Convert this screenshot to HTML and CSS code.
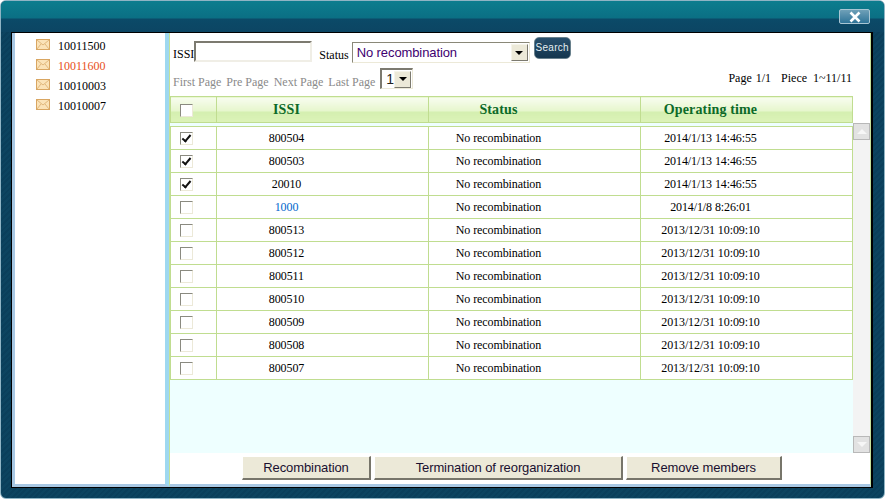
FILE: index.html
```html
<!DOCTYPE html>
<html lang="en">
  <head>
    <meta charset="UTF-8" />
    <title>Group members</title>
    <link rel="stylesheet" href="styles.css">
  </head>
  <body>
    <div class="window">
      <div class="titlebar">
        <button class="close" aria-label="Close">
          <svg width="14" height="12" viewBox="0 0 14 12"><path d="M2.5 1.5 L11.5 10.5 M11.5 1.5 L2.5 10.5" stroke="#fff" stroke-width="2.6" fill="none"/></svg>
        </button>
      </div>
      <div class="frame">
        <div class="sidebar">
          <ul class="group-list">
            <li><svg class="mail" width="14" height="11" viewBox="0 0 14 11"><rect x="0.5" y="0.5" width="13" height="10" fill="#fbe3b8" stroke="#d9a662"/><path d="M1 1 L7 6 L13 1 M1 10 L5 5 M13 10 L9 5" fill="none" stroke="#e0b77c"/></svg>10011500</li>
            <li class="active"><svg class="mail" width="14" height="11" viewBox="0 0 14 11"><rect x="0.5" y="0.5" width="13" height="10" fill="#fbe3b8" stroke="#d9a662"/><path d="M1 1 L7 6 L13 1 M1 10 L5 5 M13 10 L9 5" fill="none" stroke="#e0b77c"/></svg>10011600</li>
            <li><svg class="mail" width="14" height="11" viewBox="0 0 14 11"><rect x="0.5" y="0.5" width="13" height="10" fill="#fbe3b8" stroke="#d9a662"/><path d="M1 1 L7 6 L13 1 M1 10 L5 5 M13 10 L9 5" fill="none" stroke="#e0b77c"/></svg>10010003</li>
            <li><svg class="mail" width="14" height="11" viewBox="0 0 14 11"><rect x="0.5" y="0.5" width="13" height="10" fill="#fbe3b8" stroke="#d9a662"/><path d="M1 1 L7 6 L13 1 M1 10 L5 5 M13 10 L9 5" fill="none" stroke="#e0b77c"/></svg>10010007</li>
          </ul>
        </div>
        <div class="main">
          <div class="search-row">
            <span class="lbl">ISSI</span><input class="issi" type="text" />
            <span class="lbl status-lbl">Status</span>
            <div class="select wide"><span>No recombination</span><i class="arrow"><b></b></i></div>
            <button class="search">Search</button>
          </div>
          <div class="pager-row">
            <div class="pager">
              <span>First Page</span><span>Pre Page</span><span>Next Page</span><span>Last Page</span>
              <div class="select small"><span>1</span><i class="arrow"><b></b></i></div>
            </div>
            <div class="page-info"><span class="page-count">Page&nbsp; 1/1</span><span>Piece&nbsp; 1~11/11</span></div>
          </div>
          <table class="head-table">
            <tr>
              <th class="c1"><i class="check"></i></th>
              <th class="c2">ISSI</th>
              <th class="c3">Status</th>
              <th class="c4">Operating time</th>
            </tr>
          </table>
          <div class="list-area">
            <div class="list">
              <table class="data-table">
                <tr><td class="c1"><i class="check on"></i></td><td class="c2">800504</td><td class="c3">No recombination</td><td class="c4">2014/1/13 14:46:55</td></tr>
                <tr><td class="c1"><i class="check on"></i></td><td class="c2">800503</td><td class="c3">No recombination</td><td class="c4">2014/1/13 14:46:55</td></tr>
                <tr><td class="c1"><i class="check on"></i></td><td class="c2">20010</td><td class="c3">No recombination</td><td class="c4">2014/1/13 14:46:55</td></tr>
                <tr><td class="c1"><i class="check"></i></td><td class="c2 link">1000</td><td class="c3">No recombination</td><td class="c4">2014/1/8 8:26:01</td></tr>
                <tr><td class="c1"><i class="check"></i></td><td class="c2">800513</td><td class="c3">No recombination</td><td class="c4">2013/12/31 10:09:10</td></tr>
                <tr><td class="c1"><i class="check"></i></td><td class="c2">800512</td><td class="c3">No recombination</td><td class="c4">2013/12/31 10:09:10</td></tr>
                <tr><td class="c1"><i class="check"></i></td><td class="c2">800511</td><td class="c3">No recombination</td><td class="c4">2013/12/31 10:09:10</td></tr>
                <tr><td class="c1"><i class="check"></i></td><td class="c2">800510</td><td class="c3">No recombination</td><td class="c4">2013/12/31 10:09:10</td></tr>
                <tr><td class="c1"><i class="check"></i></td><td class="c2">800509</td><td class="c3">No recombination</td><td class="c4">2013/12/31 10:09:10</td></tr>
                <tr><td class="c1"><i class="check"></i></td><td class="c2">800508</td><td class="c3">No recombination</td><td class="c4">2013/12/31 10:09:10</td></tr>
                <tr><td class="c1"><i class="check"></i></td><td class="c2">800507</td><td class="c3">No recombination</td><td class="c4">2013/12/31 10:09:10</td></tr>
              </table>
            </div>
            <div class="scrollbar">
              <div class="scroll-btn"><b class="up"></b></div>
              <div class="scroll-btn"><b class="down"></b></div>
            </div>
          </div>
          <div class="actions">
            <button class="btn-recomb">Recombination</button>
            <button class="btn-term">Termination of reorganization</button>
            <button class="btn-remove">Remove members</button>
          </div>
        </div>
      </div>
    </div>
  </body>
</html>
```

FILE: styles.css
```css
html,
body {
  margin: 0;
  padding: 0;
  background: #fff;
}
.window {
  width: 885px;
  height: 499px;
  box-sizing: border-box;
  display: flex;
  flex-direction: column;
  padding: 0 11px 10px 10px;
  border: 1px solid #8fb4c4;
  border-radius: 6px;
  background: repeating-linear-gradient(135deg, #0c4460 0 2px, #0a3f5b 2px 4px);
  overflow: hidden;
}
.titlebar {
  height: 31px;
  margin: 0 -11px 0 -10px;
  flex: none;
  display: flex;
  justify-content: flex-end;
  align-items: flex-start;
  padding: 8px 14px 0 0;
  box-sizing: border-box;
  background: linear-gradient(#0c7d8e 0, #0b6f84 17px, #0b4a68 18px, #0c4563 100%);
}
.close {
  width: 31px;
  height: 15px;
  padding: 0;
  display: flex;
  align-items: center;
  justify-content: center;
  background: linear-gradient(#6fa0b8, #2f7498);
  border: 1px solid #a9c6d4;
  border-radius: 2px;
}
.frame {
  flex: 1;
  display: flex;
  box-sizing: border-box;
  border: 1px solid #000;
  border-right-width: 2px;
  background: #fff;
  min-height: 0;
}
.sidebar {
  width: 150px;
  flex: none;
  margin-left: 3px;
  background: #fff;
  box-shadow: -3px 0 0 #a8c8e4;
  border-right: 4px solid #9ed8f0;
  border-bottom: 3px solid #a8c8e4;
}
.group-list {
  list-style: none;
  margin: 0;
  padding: 3px 0 0 21px;
  font: 12px "Liberation Serif", serif;
  color: #000;
}
.group-list li {
  height: 20px;
  line-height: 20px;
  display: flex;
  align-items: center;
  gap: 8px;
}
.group-list .mail {
  margin-top: -3px;
}
.group-list .active {
  color: #e8501a;
}
.main {
  flex: 1;
  min-width: 0;
  display: flex;
  flex-direction: column;
  border-left: 1px solid #c4e09a;
  border-right: 1px solid #c4e09a;
  border-bottom: 3px solid #a8c8e4;
  font: 12px "Liberation Serif", serif;
  color: #000;
}
.search-row {
  height: 30px;
  flex: none;
  display: flex;
  align-items: flex-start;
  padding: 8px 0 0 3px;
  box-sizing: border-box;
}
.lbl {
  line-height: 14px;
  margin-top: 6px;
}
.status-lbl {
  margin-top: 7px;
  margin-left: 7px;
  margin-right: 3px;
}
.issi {
  width: 118px;
  height: 21px;
  box-sizing: border-box;
  margin: 0;
  padding: 0;
  border: 2px solid;
  border-color: #7c7a70 #f0eee6 #f0eee6 #7c7a70;
  background: #fff;
}
.select {
  box-sizing: border-box;
  display: flex;
  align-items: center;
  background: #fff;
  border: 1px solid;
  border-color: #8a8878 #ece9d8 #ece9d8 #8a8878;
  font: 13px "Liberation Sans", sans-serif;
  color: #400070;
}
.select span {
  flex: 1;
  padding-left: 4px;
  letter-spacing: -0.1px;
}
.select.wide {
  width: 178px;
  height: 21px;
  margin-top: 1px;
}
.select.small {
  width: 33px;
  height: 21px;
  color: #222;
  font-size: 14px;
  border-width: 2px 1px 1px 2px;
  border-color: #7c7a70 #ece9d8 #ece9d8 #7c7a70;
}
.arrow {
  width: 17px;
  height: 17px;
  margin-right: 1px;
  flex: none;
  box-sizing: border-box;
  display: flex;
  align-items: center;
  justify-content: center;
  background: #ece9d8;
  border: 1px solid;
  border-color: #f5f4ea #7c7a70 #7c7a70 #f5f4ea;
}
.arrow b {
  width: 0;
  height: 0;
  border-left: 4px solid transparent;
  border-right: 4px solid transparent;
  border-top: 4px solid #000;
}
.search {
  width: 37px;
  height: 22px;
  margin: -4px 0 0 4px;
  padding: 0 0 2px;
  border: 1px solid #68808c;
  border-radius: 5px;
  background: linear-gradient(#274f6c, #14364e);
  color: #e4eef2;
  font: 10px "Liberation Sans", sans-serif;
  letter-spacing: 0.3px;
}
.pager-row {
  height: 33px;
  flex: none;
  display: flex;
  justify-content: space-between;
  align-items: flex-start;
  padding: 5px 18px 0 3px;
  box-sizing: border-box;
}
.pager {
  display: flex;
  align-items: flex-start;
  gap: 5px;
  color: #8a8a8a;
  height: 21px;
}
.pager > span {
  line-height: 14px;
  margin-top: 7px;
}
.page-info {
  display: flex;
  gap: 10px;
  line-height: 20px;
}
.page-count {
  word-spacing: -1px;
}
table {
  border-collapse: collapse;
  table-layout: fixed;
  width: 683px;
}
.c1 {
  width: 46px;
}
.c2,
.c3 {
  width: 212px;
}
.head-table {
  flex: none;
}
.head-table th {
  height: 26px;
  padding: 1px 72px 0 0;
  box-sizing: border-box;
  border: 1px solid #c0dd90;
  background: linear-gradient(#f8fdf0 0, #e6f6cc 55%, #d4efb0 58%, #dcf3b8 100%);
  color: #0c6a28;
  font-size: 14px;
  font-weight: bold;
  letter-spacing: 0.15px;
  text-align: center;
  vertical-align: middle;
}
.head-table th.c1 {
  padding-right: 14px;
}
.list-area {
  flex: 1;
  min-height: 0;
  display: flex;
  background: #eeffff;
}
.list {
  width: 683px;
  flex: none;
  padding-top: 3px;
}
.data-table td {
  height: 23px;
  padding: 0 72px 0 0;
  box-sizing: border-box;
  border: 1px solid #c0dd90;
  background: #fff;
  letter-spacing: -0.1px;
  text-align: center;
  vertical-align: middle;
}
.data-table td.c1 {
  padding-right: 14px;
}
.data-table .link {
  color: #0066cc;
}
.check {
  display: block;
  width: 11px;
  height: 11px;
  margin: 0 auto;
  background: #fff;
  border: 1px solid;
  border-color: #8a8a80 #ece9d8 #ece9d8 #8a8a80;
  position: relative;
}
.check.on::after {
  content: "";
  position: absolute;
  left: 3px;
  top: 0;
  width: 3px;
  height: 7px;
  border: solid #111;
  border-width: 0 2px 2px 0;
  transform: rotate(40deg);
}
.scrollbar {
  flex: 1;
  display: flex;
  flex-direction: column;
  justify-content: space-between;
  background: #f3f3f3;
}
.scroll-btn {
  height: 15px;
  display: flex;
  align-items: center;
  justify-content: center;
  background: #e2e2e2;
  border: 1px solid #b8b8b8;
}
.scroll-btn b {
  width: 0;
  height: 0;
  border-left: 5px solid transparent;
  border-right: 5px solid transparent;
}
.scroll-btn .up {
  border-bottom: 5px solid #f6f6f6;
}
.scroll-btn .down {
  border-top: 5px solid #f6f6f6;
}
.actions {
  height: 31px;
  flex: none;
  box-sizing: border-box;
  display: flex;
  gap: 3px;
  padding: 3px 0 0 72px;
  background: #fff;
}
.actions button {
  height: 24px;
  padding: 0;
  background: #ece9d8;
  border: solid;
  border-color: #fff #77756a #77756a #fff;
  border-width: 1px 2px 2px 1px;
  color: #1a1030;
  font: 13px "Liberation Sans", sans-serif;
  letter-spacing: -0.1px;
}
.btn-recomb {
  width: 129px;
}
.btn-term {
  width: 249px;
}
.btn-remove {
  width: 156px;
}
```
